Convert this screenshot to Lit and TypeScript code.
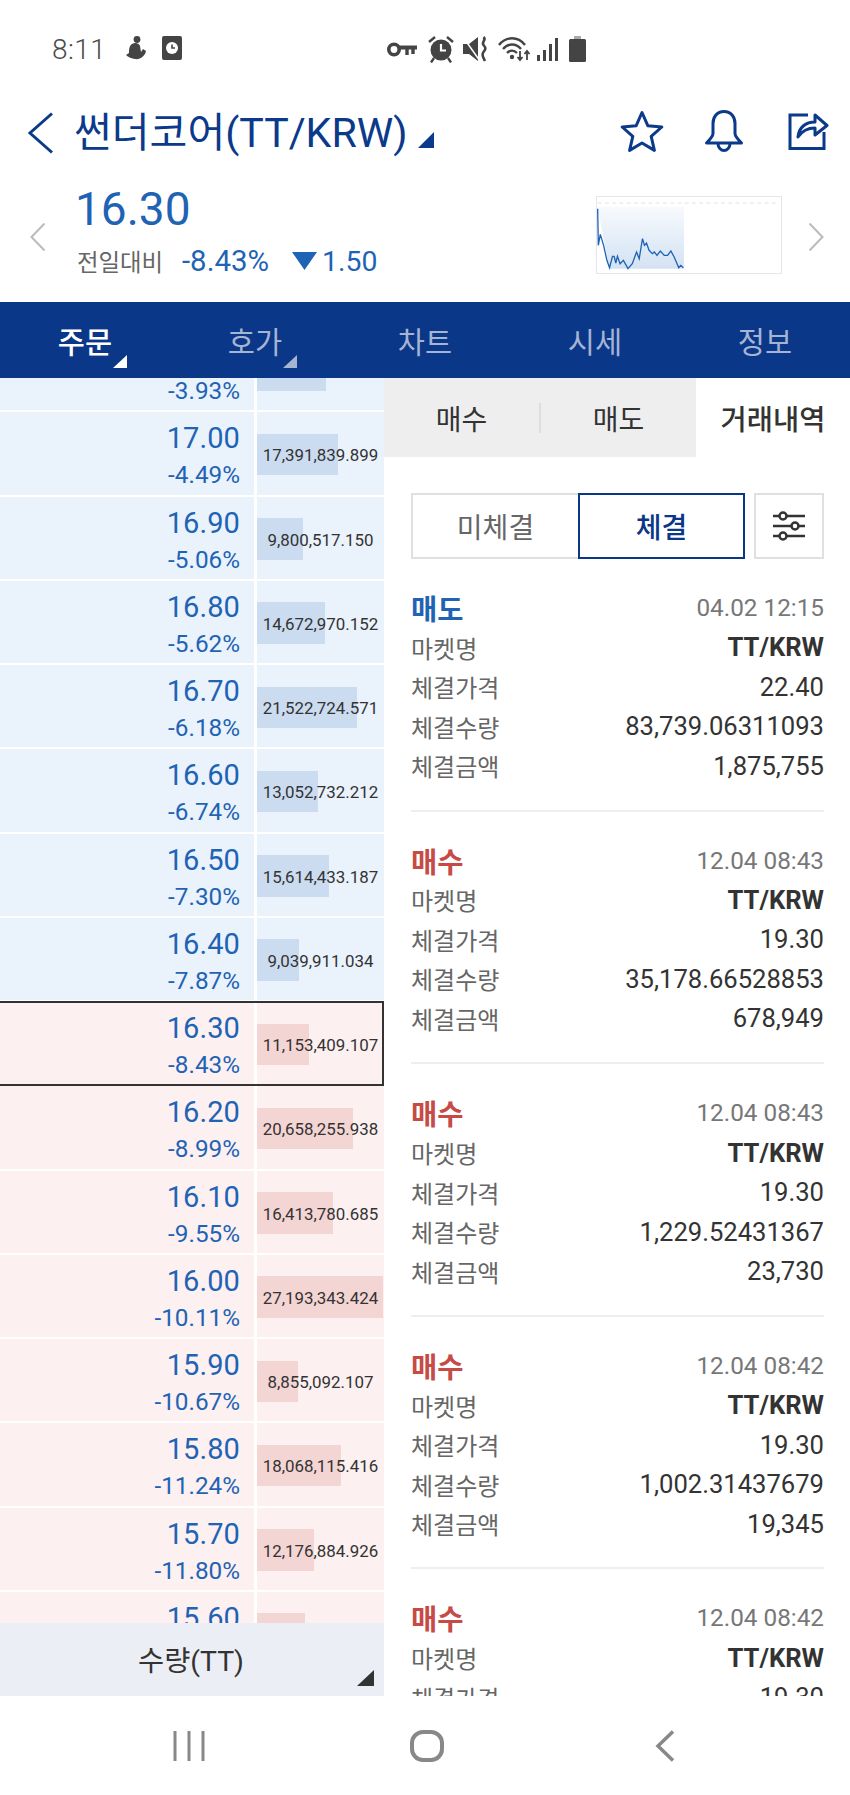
import { LitElement, html, css, svg } from "lit";
import { customElement } from "lit/decorators.js";

const PX_PER_MILLION = 4.64;
type Row = { p: string; c: string; q: string; m: number; up: boolean; cur?: boolean };
const rows: Row[] = [
  { p: "", c: "-3.93%", q: "", m: 14.87, up: false },
  { p: "17.00", c: "-4.49%", q: "17,391,839.899", m: 17.39, up: false },
  { p: "16.90", c: "-5.06%", q: "9,800,517.150", m: 9.8, up: false },
  { p: "16.80", c: "-5.62%", q: "14,672,970.152", m: 14.67, up: false },
  { p: "16.70", c: "-6.18%", q: "21,522,724.571", m: 21.52, up: false },
  { p: "16.60", c: "-6.74%", q: "13,052,732.212", m: 13.05, up: false },
  { p: "16.50", c: "-7.30%", q: "15,614,433.187", m: 15.61, up: false },
  { p: "16.40", c: "-7.87%", q: "9,039,911.034", m: 9.04, up: false },
  { p: "16.30", c: "-8.43%", q: "11,153,409.107", m: 11.15, up: true, cur: true },
  { p: "16.20", c: "-8.99%", q: "20,658,255.938", m: 20.66, up: true },
  { p: "16.10", c: "-9.55%", q: "16,413,780.685", m: 16.41, up: true },
  { p: "16.00", c: "-10.11%", q: "27,193,343.424", m: 27.19, up: true },
  { p: "15.90", c: "-10.67%", q: "8,855,092.107", m: 8.86, up: true },
  { p: "15.80", c: "-11.24%", q: "18,068,115.416", m: 18.07, up: true },
  { p: "15.70", c: "-11.80%", q: "12,176,884.926", m: 12.18, up: true },
  { p: "15.60", c: "", q: "", m: 10.3, up: true },
];

const trades = [
  { side: "매도", sell: true, time: "04.02 12:15", price: "22.40", qty: "83,739.06311093", amt: "1,875,755" },
  { side: "매수", sell: false, time: "12.04 08:43", price: "19.30", qty: "35,178.66528853", amt: "678,949" },
  { side: "매수", sell: false, time: "12.04 08:43", price: "19.30", qty: "1,229.52431367", amt: "23,730" },
  { side: "매수", sell: false, time: "12.04 08:42", price: "19.30", qty: "1,002.31437679", amt: "19,345" },
  { side: "매수", sell: false, time: "12.04 08:42", price: "19.30", qty: "", amt: "" },
];

const chartPts =
  "50,85 52,195 58,162 68,195 78,240 86,262 95,228 100,228 105,248 110,228 118,250 128,240 142,265 155,250 168,215 176,235 186,175 192,195 198,188 206,210 216,220 222,215 230,225 240,212 252,225 262,225 272,212 282,230 296,262 302,255 310,262";

const tabs = [
  { t: "주문", on: true, tri: true },
  { t: "호가", on: false, tri: true },
  { t: "차트", on: false, tri: false },
  { t: "시세", on: false, tri: false },
  { t: "정보", on: false, tri: false },
];

@customElement("app-root")
export class AppRoot extends LitElement {
  static styles = css`
    :host { display: block; width: 850px; height: 1795px; overflow: hidden; background: #fff;
      font-family: Roboto, "Noto Sans CJK KR", sans-serif; color: #333; }
    * { box-sizing: border-box; }
    svg { display: block; }
    .status { height: 89px; display: flex; align-items: flex-start; padding: 35px 0 0 52px; color: #4a4a4a; }
    .time { font-size: 28px; font-weight: 300; line-height: 30px; width: 73px; letter-spacing: 0.4px; }
    .st-left { display: flex; gap: 16px; margin-top: 1px; }
    .st-right { display: flex; align-items: center; margin-left: 205px; height: 28px; }
    .st-right svg:nth-child(2) { margin-left: 11px; }
    .st-right svg:nth-child(3) { margin-left: 9px; }
    .st-right svg:nth-child(4) { margin-left: 10px; }
    .st-right svg:nth-child(5) { margin-left: 6px; }
    .st-right svg:nth-child(6) { margin-left: 10px; }

    .title { height: 87px; display: flex; align-items: center; padding-left: 27px; color: #0b3a8a; }
    .title h1 { margin: 0 0 0 20px; font-size: 41.1px; font-weight: 400; line-height: 50px; white-space: nowrap; }
    .tri-title { margin: 15px 0 0 11px; }
    .actions { margin-left: auto; display: flex; align-items: center; padding: 0 21px 4px 0; }
    .actions svg:nth-child(2) { margin-left: 40px; }
    .actions svg:nth-child(3) { margin-left: 44px; }

    .quote { height: 126px; display: flex; align-items: flex-start; padding-left: 30px; }
    .q-prev { margin-top: 47px; }
    .q-info { margin-left: 31px; margin-top: 7px; width: 520px; }
    .q-price { font-size: 46px; line-height: 52px; color: #1f63b5; margin-left: -1px; }
    .q-sub { display: flex; align-items: center; margin-top: 9px; height: 34px; color: #1f63b5; font-size: 28.4px; }
    .q-lab { font-size: 23.4px; color: #666; width: 105px; margin-left: 1px; }
    .q-pct { width: 110px; font-size: 29.4px; }
    .q-tri { margin: 0 5px 0 0; }
    .chart { margin-top: 20px; width: 186px; height: 78px; border: 1.5px solid #e6e6e6; position: relative; }
    .q-next { margin: 47px 0 0 27px; }

    nav { height: 76px; background: #0a3788; display: flex; }
    nav a { flex: 1; position: relative; text-align: center; font-size: 29.5px; line-height: 82px; color: #a6b4d4; }
    nav a.on { color: #fff; font-weight: 500; }
    nav svg { position: absolute; left: 113px; top: 53px; }

    .body { height: 1318px; display: flex; overflow: hidden; }
    .left { width: 384px; position: relative; overflow: hidden; }
    .list { margin-top: -50px; }
    .row { height: 84.25px; display: flex; border-bottom: 2px solid #fff; position: relative; }
    .row.down .cell { background: #eaf2fb; }
    .row.rise .cell { background: #fcf0f0; }
    .cell { height: 100%; }
    .c-price { width: 254px; padding: 6px 14px 0 0; text-align: right; color: #1f63b5; }
    .pr { font-size: 29px; line-height: 40px; height: 40px; letter-spacing: 0.1px; }
    .pc { font-size: 24.3px; line-height: 34px; }
    .c-qty { width: 127px; margin-left: 3px; position: relative; display: flex; align-items: center; justify-content: center; padding-top: 4px; }
    .bar { position: absolute; left: 0; top: 21.5px; height: 41.5px; }
    .row.down .bar { background: #cbdcf0; }
    .row.rise .bar { background: #f3d5d4; }
    .q { position: relative; font-size: 16.9px; color: #333; white-space: nowrap; }
    .cur::after { content: ""; position: absolute; left: -3px; top: -1px; right: 0; bottom: -2px; border: 2px solid #333; pointer-events: none; }
    .sum { position: absolute; left: 0; right: 0; bottom: 0; height: 73px; background: #eceef5; text-align: center;
      font-size: 28.4px; line-height: 78px; padding-right: 2px; color: #333; }
    .sum svg { position: absolute; left: 357px; top: 47px; }

    .right { flex: 1; overflow: hidden; }
    .rtabs { height: 79px; display: flex; }
    .rtabs-gray { width: 312px; background: #eeeeee; display: flex; align-items: center; }
    .rtabs-gray span { flex: 1; text-align: center; font-size: 28px; color: #333; }
    .rtabs-gray i { width: 2px; height: 30px; background: #dedede; }
    .rtabs-on { flex: 1; display: flex; align-items: center; justify-content: center; font-size: 28.5px; font-weight: 500; color: #333; }
    .seg { display: flex; margin: 36px 26px 0 27px; height: 66px; }
    .seg-off { width: 167px; border: 2px solid #e0e0e0; border-right: 0; display: flex; align-items: center; justify-content: center; font-size: 28px; color: #666; }
    .seg-on { width: 167px; border: 2.5px solid #0a3788; display: flex; align-items: center; justify-content: center; font-size: 28px; font-weight: 500; color: #0a3788; }
    .filter { margin-left: 9px; width: 70px; border: 2px solid #e0e0e0; display: flex; align-items: center; justify-content: center; }
    .trade { height: 252.6px; margin: 0 26px 0 27px; padding-top: 28.6px; border-bottom: 2px solid #eeeeee; }
    .t-head { display: flex; justify-content: space-between; align-items: center; height: 40px; }
    .t-side { font-size: 28.5px; font-weight: 700; }
    .t-side.sell { color: #1f63b5; }
    .t-side.buy { color: #c64a45; }
    .t-time { font-size: 24.3px; color: #777; }
    .t-row { display: flex; justify-content: space-between; align-items: center; height: 39.5px; }
    .t-row span { font-size: 24px; color: #666; }
    .t-row b { font-size: 25.6px; font-weight: 400; color: #333; }
    .t-row b.mk { font-size: 25.6px; font-weight: 700; }

    .bottom { height: 99px; background: #fff; position: relative; z-index: 1; display: flex; padding: 34px 0 0 173px; }
    .b-home { margin-left: 205px; }
    .b-back { margin-left: 211px; }
  `;

  private statusLeft() {
    return html`<div class="st-left">
      <svg width="21" height="24" viewBox="0 0 21 24" fill="#444"><circle cx="12" cy="3.500" r="3.400"/><path d="M7 8c3-2 7-1 8 2l1 6 2-3 3 2c-1 5-6 9-11 8-3-.5-7-1.500-9-4l3-2c0-3 0-7 3-9z"/></svg>
      <svg width="20" height="24" viewBox="0 0 20 24"><rect width="20" height="24" rx="2" fill="#444"/><circle cx="10" cy="12" r="6" fill="#fff"/><path d="M10 8.500V12h3" stroke="#444" stroke-width="1.600" fill="none"/></svg>
    </div>`;
  }

  private statusRight() {
    return html`<div class="st-right">
      <svg width="30" height="15" viewBox="0 0 30 15" fill="none" stroke="#444"><circle cx="7" cy="7.500" r="5.200" stroke-width="3.600"/><path d="M12 5.500h18" stroke-width="4"/><path d="M20 7v6M26 7v5" stroke-width="3.400"/></svg>
      <svg width="26" height="27" viewBox="0 0 26 27"><circle cx="13" cy="14" r="10.500" fill="#444"/><path d="M13 8v6.500h5" stroke="#fff" stroke-width="2.200" fill="none"/><path d="M1 6l6-5M25 6l-6-5M6 22l-3 4.500M20 22l3 4.500" stroke="#444" stroke-width="2.400"/></svg>
      <svg width="25" height="26" viewBox="0 0 25 26" fill="#444"><path d="M0 8h6l9-7v24l-9-7H0z"/><path d="M0 1l17 24" stroke="#fff" stroke-width="1.500"/><path d="M20.500 1c3.500 3-2.500 5 0 8s2.500 4 0 7 0 6 1.500 9" stroke="#444" stroke-width="2.600" fill="none"/></svg>
      <svg width="33" height="26" viewBox="0 0 33 26" fill="none" stroke="#444" stroke-width="2.400"><path d="M1 9c7-9 19-9 26 0M5 13c5-6 13-6 18 0M9 17c3-3 7-3 10 0"/><circle cx="14" cy="21" r="2.200" fill="#444" stroke="none"/><path d="M22 15v9M19.500 21l2.500 3 2.500-3M29 24v-9M26.500 18l2.500-3 2.500 3" stroke-width="1.800"/></svg>
      <svg width="22" height="25" viewBox="0 0 22 25" fill="#444"><rect x="0" y="18" width="3" height="6"/><rect x="6" y="13" width="3" height="11"/><rect x="12" y="7" width="3" height="17"/><rect x="18" y="1" width="3" height="23"/></svg>
      <svg width="17" height="26" viewBox="0 0 17 26"><rect x="5" y="0" width="7" height="3" fill="#aaa"/><rect x="0" y="3" width="17" height="23" rx="1.500" fill="#444"/></svg>
    </div>`;
  }

  private titleBar() {
    return html`<div class="title">
      <svg width="27" height="42" viewBox="0 0 27 42" fill="none" stroke="#0b3a8a" stroke-width="3"><path d="M25 1.500L3 21l22 19.500"/></svg>
      <h1>썬더코어(TT/KRW)</h1>
      <svg class="tri-title" width="16" height="16" viewBox="0 0 16 16"><path d="M16 0v16H0z" fill="#0b3a8a"/></svg>
      <div class="actions">
        <svg width="44" height="42" viewBox="0 0 44 42" fill="none" stroke="#0b3a8a" stroke-width="3" stroke-linejoin="round"><path d="M22 2.500l5.800 13.200 14 1.300-10.600 9.400 3.200 14L22 33l-12.400 7.400 3.200-14L2.200 17l14-1.300z"/></svg>
        <svg width="40" height="42" viewBox="0 0 40 42" fill="none" stroke="#0b3a8a" stroke-width="3" stroke-linejoin="round"><path d="M20 1.500c-7 0-11 5.500-11 12v10c0 3-3 6-6.500 9.500h35C34 29.500 31 26.500 31 23.500v-10c0-6.500-4-12-11-12z"/><path d="M14 33.500c0 4 3 7 6 7s6-3 6-7"/></svg>
        <svg width="41" height="41" viewBox="0 0 41 41" fill="none" stroke="#0b3a8a" stroke-width="3"><path d="M20 5H2v33.500h34V22"/><path d="M10 27c1-10 8-15 17-15V5l12 10.500L27 25v-7c-8 0-13 3-17 9z" stroke-linejoin="round"/></svg>
      </div>
    </div>`;
  }

  private quote() {
    return html`<div class="quote">
      <svg class="q-prev" width="15" height="28" viewBox="0 0 15 28" fill="none" stroke="#bbb" stroke-width="2"><path d="M14.500 .500L1.500 14l13 13.500"/></svg>
      <div class="q-info">
        <div class="q-price">16.30</div>
        <div class="q-sub">
          <span class="q-lab">전일대비</span>
          <span class="q-pct">-8.43%</span>
          <svg class="q-tri" width="25" height="18" viewBox="0 0 25 18"><path d="M0 0h25L12.500 18z" fill="#1f63b5"/></svg>
          <span>1.50</span>
        </div>
      </div>
      <div class="chart">
        ${svg`<svg width="183" height="75" viewBox="48 50 555 225" preserveAspectRatio="none">
          <defs><linearGradient id="g" x1="0" y1="0" x2="0" y2="1"><stop offset="0" stop-color="#f7fafd"/><stop offset="1" stop-color="#d3e2f3"/></linearGradient></defs>
          <path d="M50 68H600" stroke="#e2e2e2" stroke-width="3" stroke-dasharray="12 10" fill="none"/>
          <path d="M50 80H312V265H310 ${chartPts.split(" ").reverse().join(" ")}Z" fill="url(#g)"/>
          <polyline points="${chartPts}" fill="none" stroke="#1f63b5" stroke-width="4"/>
        </svg>`}
      </div>
      <svg class="q-next" width="15" height="28" viewBox="0 0 15 28" fill="none" stroke="#bbb" stroke-width="2"><path d="M.500 .500L13.500 14 .500 27.500"/></svg>
    </div>`;
  }

  private nav() {
    return html`<nav>
      ${tabs.map((t) => html`<a class=${t.on ? "on" : ""}>${t.t}${t.tri
        ? html`<svg width="14" height="13" viewBox="0 0 14 13"><path d="M14 0v13H0z" fill=${t.on ? "#fff" : "#a6b4d4"}/></svg>`
        : ""}</a>`)}
    </nav>`;
  }

  private book() {
    return html`<div class="left">
      <div class="list">
        ${rows.map((r) => html`<div class="row ${r.up ? "rise" : "down"} ${r.cur ? "cur" : ""}">
          <div class="cell c-price"><div class="pr">${r.p}</div><div class="pc">${r.c}</div></div>
          <div class="cell c-qty">
            <div class="bar" style="width:${(r.m * PX_PER_MILLION).toFixed(1)}px"></div>
            <span class="q">${r.q}</span>
          </div>
        </div>`)}
      </div>
      <div class="sum">수량(TT)
        <svg width="17" height="16" viewBox="0 0 17 16"><path d="M17 0v16H0z" fill="#333"/></svg>
      </div>
    </div>`;
  }

  private history() {
    return html`<div class="right">
      <div class="rtabs">
        <div class="rtabs-gray"><span>매수</span><i></i><span>매도</span></div>
        <div class="rtabs-on">거래내역</div>
      </div>
      <div class="seg">
        <div class="seg-off">미체결</div>
        <div class="seg-on">체결</div>
        <div class="filter">
          <svg width="34" height="30" viewBox="0 0 34 30" fill="#fff" stroke="#333" stroke-width="2.500"><path d="M1 5h32M1 15h32M1 25h32"/><circle cx="11" cy="5" r="3.500"/><circle cx="23" cy="15" r="3.500"/><circle cx="11" cy="25" r="3.500"/></svg>
        </div>
      </div>
      ${trades.map((t) => html`<div class="trade">
        <div class="t-head"><span class="t-side ${t.sell ? "sell" : "buy"}">${t.side}</span><span class="t-time">${t.time}</span></div>
        <div class="t-row"><span>마켓명</span><b class="mk">TT/KRW</b></div>
        <div class="t-row"><span>체결가격</span><b>${t.price}</b></div>
        ${t.qty
          ? html`<div class="t-row"><span>체결수량</span><b>${t.qty}</b></div>
              <div class="t-row"><span>체결금액</span><b>${t.amt}</b></div>`
          : ""}
      </div>`)}
    </div>`;
  }

  render() {
    return html`
      <div class="status"><span class="time">8:11</span>${this.statusLeft()}${this.statusRight()}</div>
      ${this.titleBar()}
      ${this.quote()}
      ${this.nav()}
      <div class="body">${this.book()}${this.history()}</div>
      <div class="bottom">
        <svg width="32" height="32" viewBox="0 0 32 32" fill="none" stroke="#888" stroke-width="3"><path d="M2 1v30M16 1v30M30 1v30"/></svg>
        <svg class="b-home" width="34" height="32" viewBox="0 0 34 32" fill="none" stroke="#888" stroke-width="4"><rect x="2" y="2" width="30" height="28" rx="11"/></svg>
        <svg class="b-back" width="20" height="32" viewBox="0 0 20 32" fill="none" stroke="#888" stroke-width="3.500"><path d="M18 1.500L3 16l15 14.500"/></svg>
      </div>
    `;
  }
}
